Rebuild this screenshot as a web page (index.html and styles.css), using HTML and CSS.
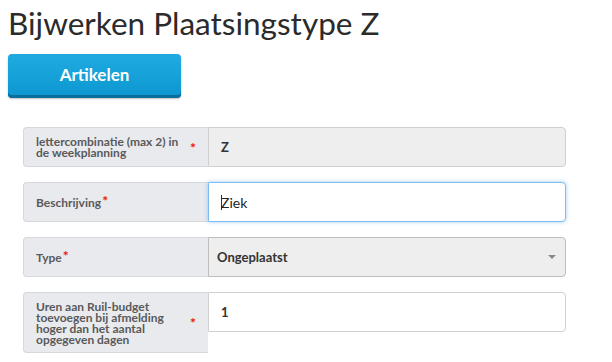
FILE: index.html
```html
<!DOCTYPE html>
<html>
<head>
<meta charset="utf-8">
<link rel="stylesheet" href="styles.css">
</head>
<body>
<h1 class="title">Bijwerken Plaatsingstype Z</h1>
<button class="btn">Artikelen</button>
<form class="form">
  <div class="row">
    <label class="lbl"><span class="lbl-text">lettercombinatie (max 2) in de weekplanning</span><span class="req">*</span></label>
    <div class="field field-ro">Z</div>
  </div>
  <div class="row">
    <label class="lbl"><span class="lbl-text">Beschrijving</span><span class="req req-top">*</span></label>
    <div class="field field-focus"><span class="cursor"></span>Ziek</div>
  </div>
  <div class="row">
    <label class="lbl"><span class="lbl-text">Type</span><span class="req req-top">*</span></label>
    <div class="field field-select">Ongeplaatst<span class="caret"></span></div>
  </div>
  <div class="row row-tall">
    <label class="lbl"><span class="lbl-text">Uren aan Ruil-budget toevoegen bij afmelding hoger dan het aantal opgegeven dagen</span><span class="req">*</span></label>
    <div class="field field-plain">1</div>
  </div>
</form>
</body>
</html>
```
FILE: styles.css
```css
html, body { margin: 0; padding: 0; background: #fff; }
body {
  padding: 0 8px;
  font-family: "Lato", "Open Sans", sans-serif;
  color: #333;
}
.title {
  margin: 4px 0 0 0;
  font-size: 31.5px;
  line-height: 38px;
  font-weight: 400;
  color: #2b2b2b;
}
.btn {
  display: block;
  margin-top: 12px;
  width: 173px;
  height: 44px;
  border: none;
  border-radius: 4px;
  background: linear-gradient(#1fabe0, #0d96d0);
  box-shadow: inset 0 -3px 0 #0a6d9b, 0 1px 2px rgba(0,0,0,0.25);
  color: #fff;
  font-family: "Lato", sans-serif;
  font-weight: 700;
  font-size: 17px;
  padding: 0 0 3px 0;
}
.form {
  margin: 29px 0 0 15px;
  width: 543px;
  display: flex;
  flex-direction: column;
  gap: 15px;
}
.row {
  display: flex;
  height: 40px;
}
.row-tall { height: 61px; align-items: flex-start; }
.lbl {
  box-sizing: border-box;
  width: 185px;
  flex: none;
  height: 100%;
  display: flex;
  align-items: center;
  padding: 0 12px 0 12px;
  background: #e8eaee;
  border: 1px solid #d4d7dc;
  border-right: none;
  border-radius: 4px 0 0 4px;
  font-size: 12px;
  line-height: 11px;
  font-weight: 700;
  color: #5a5a5a;
}
.lbl-text { flex: 0 1 auto; }
.req {
  color: #f01010;
  font-size: 14px;
  margin-left: 4px;
  flex: none;
}
.req-top { margin-left: 1px; align-self: center; position: relative; top: -2px; }
.field {
  box-sizing: border-box;
  flex: 1;
  height: 40px;
  display: flex;
  align-items: center;
  padding: 0 12px;
  border: 1px solid #d0d0d0;
  border-radius: 0 4px 4px 0;
  font-size: 13px;
  color: #333;
}
.field-ro { background: #eeeeee; font-weight: 700; }
.field-focus {
  background: #fff;
  border-color: #7fbdf0;
  box-shadow: 0 0 4px rgba(102,175,233,0.6);
  font-weight: 400;
  font-size: 14px;
  color: #222;
}
.cursor {
  display: inline-block;
  width: 1px;
  height: 15px;
  background: #333;
  margin-right: -1px;
}
.field-select {
  background: #eeeeee;
  border-color: #bdbdbd;
  font-weight: 700;
  justify-content: space-between;
  padding-left: 8px;
}
.caret {
  width: 0; height: 0;
  border-left: 4px solid transparent;
  border-right: 4px solid transparent;
  border-top: 4px solid #888;
  margin-right: -3px;
}
.field-plain { background: #fff; font-weight: 700; }
```
